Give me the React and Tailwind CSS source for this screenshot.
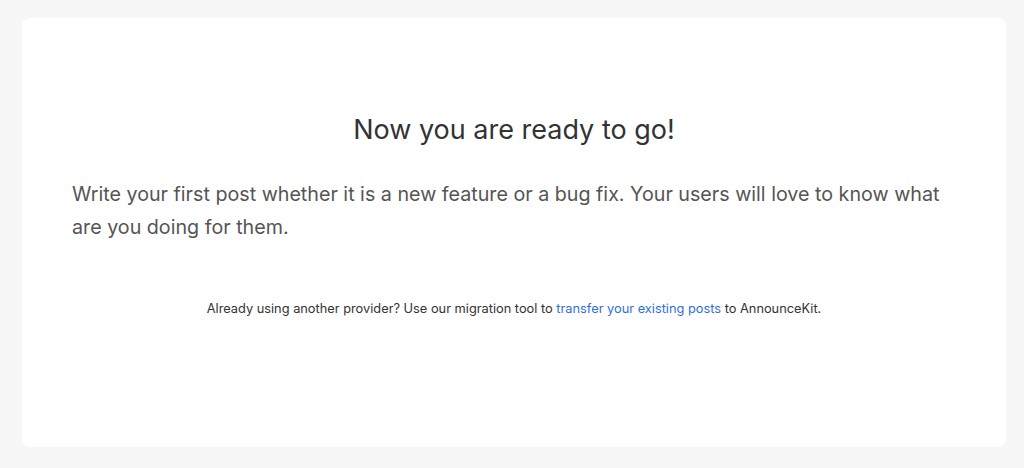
import React from 'react';

const App = () => {
    return (
        <div className="min-h-[468px] bg-[#f7f7f7] pl-[22px] pr-[18px] pt-[18px] pb-[21px]" style={{ fontFamily: 'Inter, "Noto Sans", sans-serif' }}>
            <div className="h-[429px] rounded-[8px] bg-white px-[50px] pt-[96px]">
                <h1 className="text-center text-[27px] leading-[32px] font-normal text-[#333333]">Now you are ready to go!</h1>
                <p className="mt-[32px] text-[19.7px] leading-[33px] text-[#555555]">
                    Write your first post whether it is a new feature or a bug fix. Your users will love to know what are you doing for them.
                </p>
                <p className="mt-[56px] text-center text-[12.8px] leading-[18px] text-[#333333]">
                    Already using another provider? Use our migration tool to{' '}
                    <a href="#" className="text-[#2f6fde]">transfer your existing posts</a>{' '}
                    to AnnounceKit.
                </p>
            </div>
        </div>
    );
};

export default App;
